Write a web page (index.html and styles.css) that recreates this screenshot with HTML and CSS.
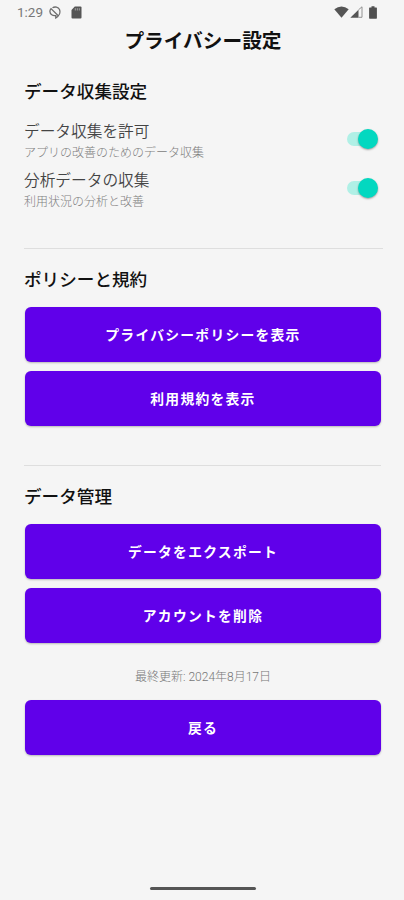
FILE: index.html
```html
<!DOCTYPE html>
<html lang="ja">
<head>
<meta charset="utf-8">
<title>プライバシー設定</title>
<link rel="stylesheet" href="styles.css">
</head>
<body>
<div class="screen">
  <header class="status">
    <span class="clock">1:29</span>
    <svg class="dnd" width="12" height="13" viewBox="0 0 12 13" fill="none" stroke="#6c6c6c" stroke-width="1.3"><path d="M3.500 1.700C6 .3 9.300 1 10.500 3.600C11.700 6.700 10 10.200 6.800 12V9.600C3.700 10.200 1 8.300.9 5.500C.9 4.300 1.300 3.300 2 2.600L9.500 10"/></svg>
    <svg class="sd" width="11" height="13" viewBox="0 0 11 13"><path fill="#555" d="M3.800.5H9.500Q10.500.5 10.500 1.500V11.500Q10.500 12.500 9.500 12.500H1.500Q.5 12.500.5 11.500V4Z"/><path d="M4.300 2.200V4.500M6.300 2.200V4.500M8.300 2.200V4.500" stroke="#aaa" stroke-width=".9"/></svg>
    <span class="spacer"></span>
    <svg class="wifi" width="15" height="12" viewBox="0 0 15 12"><path fill="#555" d="M.3 3.200Q7.500-2.300 14.700 3.200L7.500 11.800Z"/></svg>
    <svg class="signal" width="13" height="12" viewBox="0 0 13 12"><path fill="#555" d="M.3 11.800L8.500 3.800V11.800Z"/><path fill="none" stroke="#888" stroke-width=".9" d="M8.500 3.800L12 .8V11.300H8.500"/></svg>
    <svg class="battery" width="8" height="13" viewBox="0 0 8 13"><path fill="#505050" d="M2.500.3H5.500V1.500H7.300Q7.900 1.500 7.900 2.100V12Q7.900 12.700 7.300 12.700H.7Q.1 12.700.1 12V2.100Q.1 1.500.7 1.500H2.500Z"/></svg>
  </header>
  <h1>プライバシー設定</h1>
  <main>
    <section class="collect">
      <h2>データ収集設定</h2>
      <div class="row">
        <div><p class="label">データ収集を許可</p><p class="hint">アプリの改善のためのデータ収集</p></div>
        <span class="switch"></span>
      </div>
      <div class="row">
        <div><p class="label">分析データの収集</p><p class="hint">利用状況の分析と改善</p></div>
        <span class="switch"></span>
      </div>
    </section>
    <section class="panel policy">
      <h2>ポリシーと規約</h2>
      <button>プライバシーポリシーを表示</button>
      <button>利用規約を表示</button>
    </section>
    <section class="panel data">
      <h2>データ管理</h2>
      <button>データをエクスポート</button>
      <button>アカウントを削除</button>
    </section>
    <p class="updated">最終更新: 2024年8月17日</p>
    <button>戻る</button>
  </main>
  <div class="home"></div>
</div>
</body>
</html>
```
FILE: styles.css
```css
* { box-sizing: border-box; margin: 0; padding: 0; }
body { background: #f5f5f5; color: #111; font-family: Roboto, "Noto Sans CJK JP", sans-serif; }
.screen { width: 404px; height: 900px; display: flex; flex-direction: column; overflow: hidden; }
.status { height: 24px; flex: none; display: flex; align-items: center; padding: 0 27px 0 17px; }
.clock { font-size: 13.5px; line-height: 24px; color: #777; width: 27px; }
.dnd { margin-left: 5px; }
.sd { margin-left: 10px; }
.spacer { flex: 1; }
.signal { margin-left: 1px; }
.battery { margin-left: 6px; }
h1 { height: 32px; line-height: 35px; padding-left: 2px; font-size: 19.7px; font-weight: 700; text-align: center; white-space: nowrap; }
main { padding: 23px 21px 0 24px; }
h2 { height: 24px; line-height: 26px; font-size: 17.6px; font-weight: 500; white-space: nowrap; }
.collect { height: 169px; }
.row { display: flex; justify-content: space-between; align-items: center; height: 41px; margin-top: 8px; }
h2 + .row { margin-top: 18px; }
.label { font-size: 15.7px; line-height: 22px; color: #444; font-weight: 350; }
.hint { font-size: 12px; line-height: 20px; color: #808080; font-weight: 300; }
.switch { position: relative; width: 31px; height: 14px; margin: 0 5px 6px 0; border-radius: 7px; background: linear-gradient(90deg, #b0f0e6 26px, transparent 26px); }
.switch::after { content: ""; position: absolute; right: 0; top: -3px; width: 20px; height: 20px; border-radius: 50%; background: #03d8c0; box-shadow: 0 1px 2px rgba(0,0,0,.35); }
.panel { border-top: 1px solid #dedede; padding-top: 18px; }
.policy { height: 217px; }
.data { height: 177px; margin-right: 2px; }
button { display: block; width: 356px; height: 55px; margin-left: .5px; border: 0; border-radius: 6px; background: #6000ea; color: #fff; font-family: inherit; font-size: 13.8px; font-weight: 700; letter-spacing: 1.25px; line-height: 53px; padding: 2px 0 0 1px; text-align: center; box-shadow: 0 1px 2px rgba(0,0,0,.25); }
h2 + button { margin-top: 16px; }
button + button { margin-top: 8.500px; }
.updated { width: 358px; height: 18px; margin: 25px 0 15px; line-height: 20px; font-size: 12px; font-weight: 300; color: #777; text-align: center; }
.home { width: 106px; height: 3px; border-radius: 2px; background: #555; margin: auto auto 10px 150px; }
```
